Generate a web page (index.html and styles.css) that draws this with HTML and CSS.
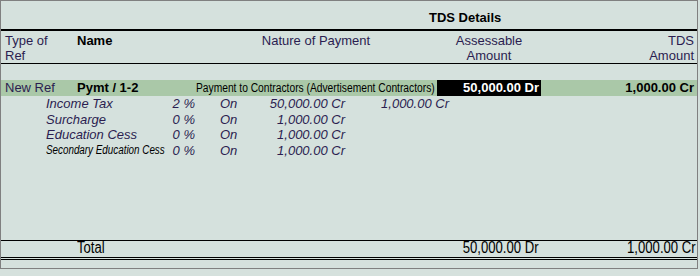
FILE: index.html
```html
<!DOCTYPE html>
<html>
<head>
<meta charset="utf-8">
<link rel="stylesheet" href="styles.css">
</head>
<body>
<div class="frame">
  <div class="title">TDS Details</div>
  <div class="row head">
    <div class="c1">Type of<br>Ref</div>
    <div class="c2 bold">Name</div>
    <div class="c3 center">Nature of Payment</div>
    <div class="c4 center">Assessable<br>Amount</div>
    <div class="c5 right">TDS<br>Amount</div>
  </div>
  <div class="gap"></div>
  <div class="row sel">
    <div class="c1">New Ref</div>
    <div class="c2 bold">Pymt / 1-2</div>
    <div class="c3 pay"><span class="cond-l">Payment to Contractors (Advertisement Contractors)</span></div>
    <div class="c4 right bold hl">50,000.00 Dr</div>
    <div class="c5 right bold">1,000.00 Cr</div>
  </div>
  <div class="subs">
    <div class="sub">
      <div class="s-name">Income Tax</div>
      <div class="s-pct">2 %</div>
      <div class="s-on">On</div>
      <div class="s-amt">50,000.00 Cr</div>
      <div class="s-tds">1,000.00 Cr</div>
    </div>
    <div class="sub">
      <div class="s-name">Surcharge</div>
      <div class="s-pct">0 %</div>
      <div class="s-on">On</div>
      <div class="s-amt">1,000.00 Cr</div>
      <div class="s-tds"></div>
    </div>
    <div class="sub">
      <div class="s-name">Education Cess</div>
      <div class="s-pct">0 %</div>
      <div class="s-on">On</div>
      <div class="s-amt">1,000.00 Cr</div>
      <div class="s-tds"></div>
    </div>
    <div class="sub">
      <div class="s-name sec"><span class="cond-l">Secondary Education Cess</span></div>
      <div class="s-pct">0 %</div>
      <div class="s-on">On</div>
      <div class="s-amt">1,000.00 Cr</div>
      <div class="s-tds"></div>
    </div>
  </div>
  <div class="filler"></div>
  <div class="row total">
    <div class="c1"></div>
    <div class="c2"><span class="cond-l">Total</span></div>
    <div class="c3"></div>
    <div class="c4 right"><span class="cond-r">50,000.00 Dr</span></div>
    <div class="c5 right"><span class="cond-r">1,000.00 Cr</span></div>
  </div>
  <div class="bottom"></div>
</div>
</body>
</html>
```

FILE: styles.css
```css
html, body {
  margin: 0;
  padding: 0;
  background: #d5e1dd;
}
body {
  font-family: "Liberation Sans", Arial, sans-serif;
  font-size: 13px;
  color: #2b1d50;
}
.frame {
  box-sizing: border-box;
  width: 698px;
  height: 269px;
  border: 1px solid #808080;
  display: flex;
  flex-direction: column;
}
.frame > div {
  flex-shrink: 0;
}
.title {
  box-sizing: border-box;
  height: 30px;
  padding-top: 9px;
  padding-left: 428px;
  line-height: 15px;
  font-weight: bold;
  color: #000;
  border-bottom: 2px solid #000;
}
.row {
  display: grid;
  grid-template-columns: 76px 118px 242px 104px 156px;
  line-height: 16px;
}
.row > div {
  white-space: nowrap;
}
.head {
  line-height: 15px;
  padding-top: 2px;
  height: 30px;
  border-bottom: 1px solid #000;
}
.c1 { padding-left: 4px; }
.c4.right { padding-right: 2px; }
.c5.right { padding-right: 3px; }
.center { text-align: center; }
.right { text-align: right; }
.bold { font-weight: bold; color: #000; }
.gap { height: 16px; }
.sel {
  background: #aac8a8;
  height: 16px;
}
.pay {
  padding-left: 1px;
  font-size: 12.5px;
  color: #000;
}
.cond-l {
  display: inline-block;
  transform: scaleX(0.82);
  transform-origin: left center;
}
.cond-r {
  display: inline-block;
  transform: scaleX(0.82);
  transform-origin: right center;
}
.hl {
  background: #000;
  color: #fff;
}
.subs {
  font-style: italic;
}
.sub {
  display: grid;
  grid-template-columns: 45px 125px 24px 25px 40px 85px 104px;
  grid-template-areas: ". name pct . on amt tds";
  line-height: 15.5px;
  height: 15.5px;
}
.sub > div { white-space: nowrap; }
.s-name { grid-area: name; }
.s-pct { grid-area: pct; text-align: right; }
.s-on { grid-area: on; }
.s-amt { grid-area: amt; text-align: right; }
.s-tds { grid-area: tds; text-align: right; }
.sec {
  font-size: 12px;
  color: #000;
}
.filler { flex: 1; }
.total {
  border-top: 1px solid #000;
  border-bottom: 3px double #000;
  height: 16px;
  line-height: 14px;
  font-size: 16px;
  color: #000;
}
.total .c5.right { padding-right: 1px; }
.bottom { height: 8px; }
```
